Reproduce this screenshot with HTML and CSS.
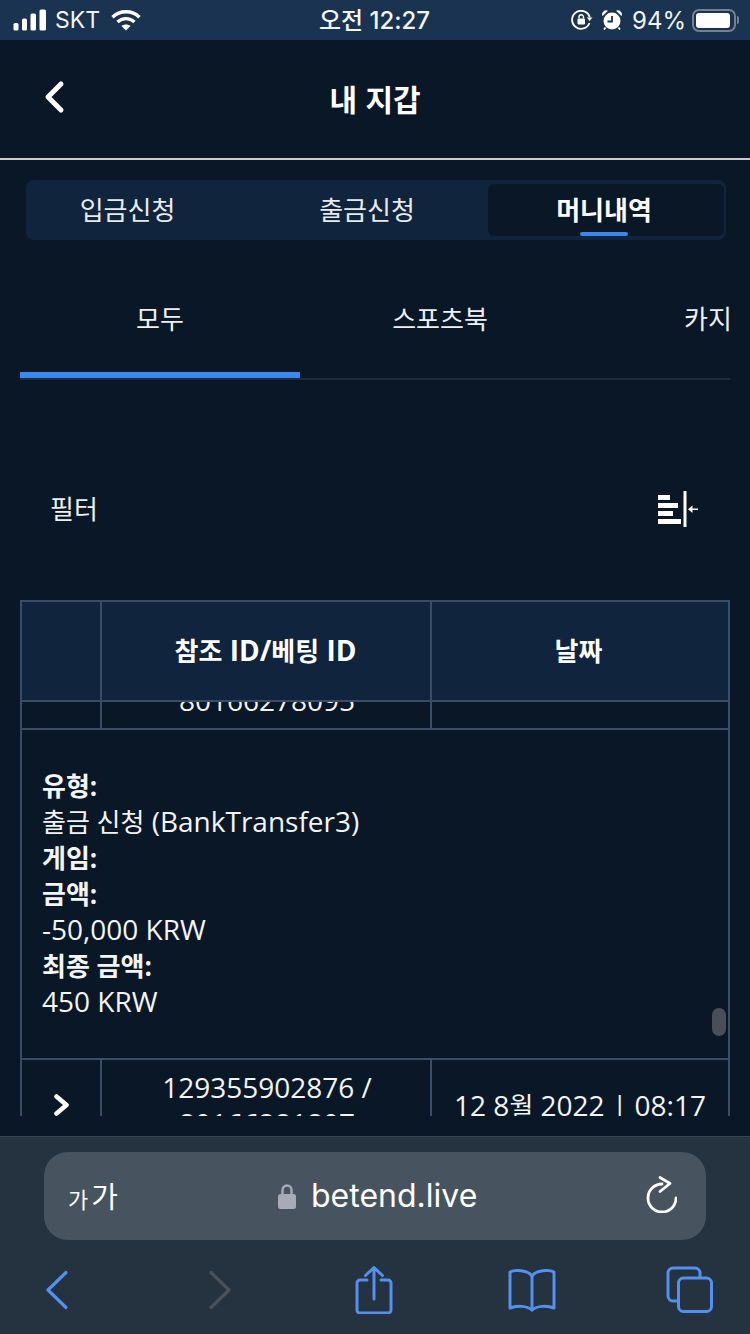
FILE: index.html
```html
<!DOCTYPE html>
<html lang="ko">
<head>
    <meta charset="UTF-8">
    <meta name="viewport" content="width=device-width, initial-scale=1.0">
    <title>내 지갑</title>
    <link rel="stylesheet" href="styles.css">
</head>
<body>
    <div class="status-bar">
        <div class="status-left">
            <svg class="signal" width="34" height="22" viewBox="0 0 34 22">
                <rect x="0.5" y="14" width="5" height="7.5" rx="1.5"/>
                <rect x="9" y="9.5" width="5" height="12" rx="1.5"/>
                <rect x="17.5" y="4.5" width="5.5" height="17" rx="1.5"/>
                <rect x="26.5" y="0.5" width="6.5" height="21" rx="1.5"/>
            </svg>
            <span>SKT</span>
            <svg class="wifi" width="30" height="22" viewBox="0 0 30 22" fill="none" stroke="#fff" stroke-width="3.4">
                <path d="M1.5 8.2C9 1 21 1 28.500 8.200"/>
                <path d="M6.500 13C11.500 8.500 18.500 8.500 23.500 13"/>
                <path d="M15 21.500L10.500 17C13 15 17 15 19.500 17Z" fill="#fff" stroke="none"/>
            </svg>
        </div>
        <div class="status-time">오전 12:27</div>
        <div class="status-right">
            <svg class="lock-icon" width="22" height="20" viewBox="0 0 22 20" fill="none" stroke="#fff" stroke-width="1.8">
                <path d="M18.500 13A9 9 0 1 1 18.800 7.500"/>
                <path d="M15.800 7.500H21.500L18.600 11Z" fill="#fff" stroke="none"/>
                <rect x="6.500" y="8.500" width="7.500" height="6" rx="1" fill="#fff" stroke="none"/>
                <path d="M8 8.500V7a2.200 2.200 0 0 1 4.500 0V8.500" stroke-width="1.400"/>
            </svg>
            <svg width="20" height="20" viewBox="0 0 20 20">
                <circle cx="10" cy="11" r="8.500" fill="#fff"/>
                <path d="M0.500 6A4 4 0 0 1 6 0.800ZM19.500 6A4 4 0 0 0 14 0.800Z" fill="#fff"/>
                <path d="M3.500 17.500L2 19.500M16.500 17.500L18 19.500" stroke="#fff" stroke-width="1.800"/>
                <path d="M10 6V11.500H5.500" fill="none" stroke="#1a3350" stroke-width="1.800"/>
            </svg>
            <span class="battery-text">94%</span>
            <div class="battery"><div class="battery-fill"></div></div>
            <div class="battery-nub"></div>
        </div>
    </div>

    <header class="top-nav">
        <svg class="back" width="24" height="36" viewBox="0 0 24 36" fill="none" stroke="#fff" stroke-width="5" stroke-linecap="round" stroke-linejoin="round">
            <path d="M19 5L6 18L19 31"/>
        </svg>
        <h1>내 지갑</h1>
    </header>

    <main class="wallet">
        <div class="segment">
            <div class="segment-item first">입금신청</div>
            <div class="segment-item">출금신청</div>
            <div class="segment-item active">머니내역</div>
        </div>

        <div class="sub-tabs">
            <div class="sub-tab active">모두</div>
            <div class="sub-tab">스포츠북</div>
            <div class="sub-tab">카지노</div>
        </div>

        <div class="filter-row">
            <span>필터</span>
            <svg width="42" height="38" viewBox="0 0 42 38" fill="#fff">
                <rect x="0" y="5" width="12" height="5"/>
                <rect x="0" y="13" width="20" height="5"/>
                <rect x="0" y="21" width="15" height="5"/>
                <rect x="0" y="29" width="23" height="5"/>
                <rect x="25.500" y="1" width="3" height="36"/>
                <rect x="34" y="18.500" width="6" height="1.500"/>
                <path d="M34.500 15.500V23L30 19.200Z"/>
            </svg>
        </div>

        <div class="history-table">
            <div class="table-row table-head">
                <div class="cell"></div>
                <div class="cell"><span class="ko">참조</span> ID/<span class="ko">베팅</span> ID</div>
                <div class="cell"><span class="ko">날짜</span></div>
            </div>
            <div class="table-body">
                <div class="table-scroll">
                    <div class="table-row">
                        <div class="cell"></div>
                        <div class="cell">129355902877 /<br>80166278095</div>
                        <div class="cell"></div>
                    </div>
                    <div class="detail-row">
                        <div><b class="ko">유형:</b></div>
                        <div><span class="ko">출금 신청</span> (BankTransfer3)</div>
                        <div><b class="ko">게임:</b></div>
                        <div><b class="ko">금액:</b></div>
                        <div>-50,000 KRW</div>
                        <div><b class="ko">최종 금액:</b></div>
                        <div>450 KRW</div>
                    </div>
                    <div class="table-row">
                        <div class="cell">
                            <svg width="20" height="24" viewBox="0 0 20 24" fill="none" stroke="#fff" stroke-width="4.500" stroke-linecap="round" stroke-linejoin="round">
                                <path d="M4.500 3.500L14.500 12L4.500 20.500"/>
                            </svg>
                        </div>
                        <div class="cell"><div>129355902876 /<br>80166281807</div></div>
                        <div class="cell"><div>12 8<span class="ko">월</span> 2022 | 08:17</div></div>
                    </div>
                </div>
                <div class="scroll-thumb"></div>
            </div>
        </div>
    </main>

    <footer class="browser-bar">
        <div class="url-field">
            <div class="text-size"><span class="small">가</span>가</div>
            <div class="url">
                <svg width="18" height="26" viewBox="0 0 18 26" fill="none">
                    <path d="M4.500 12V7a4.500 4.500 0 0 1 9 0V12" stroke="#a7abb5" stroke-width="2.400"/>
                    <rect x="0" y="11" width="18" height="15" rx="2.500" fill="#a7abb5"/>
                </svg>
                <span>betend.live</span>
            </div>
            <svg class="reload" width="32" height="38" viewBox="0 0 32 38" fill="none" stroke="#fff" stroke-width="2.800" stroke-linecap="round" stroke-linejoin="round">
                <path d="M17 9A14 14 0 1 0 31 23"/>
                <path d="M15 2.500L25 8.500L15 16.500"/>
            </svg>
        </div>
        <nav class="toolbar">
            <svg width="48" height="48" viewBox="0 0 48 48" fill="none" stroke="#5390f0" stroke-width="3.200" stroke-linecap="round" stroke-linejoin="round">
                <path d="M33 6.500L15 24L33 41.500"/>
            </svg>
            <svg width="48" height="48" viewBox="0 0 48 48" fill="none" stroke="#4b5158" stroke-width="3.200" stroke-linecap="round" stroke-linejoin="round">
                <path d="M20 6.500L38 24L20 41.500"/>
            </svg>
            <svg width="48" height="48" viewBox="0 0 48 48" fill="none" stroke="#5390f0" stroke-width="3" stroke-linecap="round" stroke-linejoin="round">
                <path d="M17 14H10a3 3 0 0 0-3 3V44a3 3 0 0 0 3 3H38a3 3 0 0 0 3-3V17a3 3 0 0 0-3-3H31"/>
                <path d="M24 33V1.500M15.500 9.500L24 1.500L32.500 9.500"/>
            </svg>
            <svg width="48" height="48" viewBox="0 0 48 48" fill="none" stroke="#5390f0" stroke-width="3" stroke-linecap="round" stroke-linejoin="round">
                <path d="M24 10C20 4 7 3.500 2 6V42C8 39.500 19 39.500 24 44C29 39.500 40 39.500 46 42V6C41 3.500 28 4 24 10Z"/>
                <path d="M24 10V44"/>
            </svg>
            <svg width="48" height="48" viewBox="0 0 48 48" fill="none" stroke="#5390f0" stroke-width="3">
                <path d="M12 35H7a5 5 0 0 1-5-5V7a5 5 0 0 1 5-5H29a5 5 0 0 1 5 5V11"/>
                <rect x="12.500" y="12" width="33" height="33.500" rx="5"/>
            </svg>
        </nav>
    </footer>
</body>
</html>
```

FILE: styles.css
```css
* {
    box-sizing: border-box;
}
html, body {
    margin: 0;
    padding: 0;
}
body {
    width: 750px;
    height: 1334px;
    overflow: hidden;
    display: flex;
    flex-direction: column;
    background: #0a1727;
    color: white;
    font-family: 'Open Sans', 'Noto Sans CJK KR', sans-serif;
    font-size: 28px;
}
.ko {
    font-size: 26px;
}

/* status bar */
.status-bar {
    height: 40px;
    flex: none;
    background: #1a3350;
    display: flex;
    align-items: center;
    justify-content: space-between;
    padding: 0 11px 0 13px;
    position: relative;
    font-family: Inter, 'Noto Sans CJK KR', sans-serif;
    font-size: 23px;
    color: #f2f4f6;
}
.status-left {
    display: flex;
    align-items: center;
    gap: 8px;
}
.status-left .wifi {
    margin-left: 3px;
}
.status-time {
    position: absolute;
    left: 319px;
    top: 1px;
    font-size: 24px;
    font-weight: 500;
    white-space: nowrap;
}
.status-right {
    display: flex;
    align-items: center;
    gap: 10px;
}
.lock-icon {
    margin-right: -1px;
}
.battery-text {
    font-size: 24px;
}
.signal {
    fill: white;
}
.battery {
    width: 44px;
    height: 23px;
    border: 2px solid #76818f;
    border-radius: 7px;
    padding: 2px;
    margin-left: -4px;
}
.battery-fill {
    height: 100%;
    width: 94%;
    background: white;
    border-radius: 3px;
}
.battery-nub {
    width: 2px;
    height: 8px;
    background: #76818f;
    margin-left: -9px;
    border-radius: 0 2px 2px 0;
}

/* title */
.top-nav {
    height: 120px;
    flex: none;
    border-bottom: 2px solid #ccc;
    display: flex;
    align-items: center;
    justify-content: center;
    position: relative;
    padding-bottom: 2px;
}
.top-nav h1 {
    margin: 0;
    font-size: 30px;
    font-weight: 700;
    font-family: 'Noto Sans CJK KR', sans-serif;
}
.back {
    position: absolute;
    left: 42px;
    top: 39px;
}

/* tabs */
.wallet {
    flex: 1;
    min-height: 0;
    padding-top: 20px;
    font-size: 28px;
}
.segment {
    margin: 0 24px 0 26px;
    height: 60px;
    background: #10243d;
    border-radius: 8px;
    display: grid;
    grid-template-columns: 220px 242px 1fr;
    padding: 4px 2px 4px 0;
    font-size: 26px;
    line-height: 52px;
    text-align: center;
    color: #e8ebee;
}
.segment-item.first {
    padding-right: 17px;
}
.segment-item.active {
    background: #0a1727;
    border-radius: 6px;
    font-weight: 700;
    color: white;
    padding-right: 4px;
    position: relative;
}
.segment-item.active::after {
    content: "";
    position: absolute;
    left: 92px;
    bottom: 0;
    width: 48px;
    height: 4px;
    border-radius: 2px;
    background: #3b86f0;
}
.sub-tabs {
    margin: 20px 20px 0;
    height: 120px;
    display: flex;
    overflow: hidden;
    border-bottom: 2px solid #1f2a3a;
    font-size: 26px;
    color: #eef0f2;
}
.sub-tab {
    flex: 0 0 280px;
    text-align: center;
    line-height: 118px;
    white-space: nowrap;
}
.sub-tab.active {
    border-bottom: 6px solid #3b86f0;
}

/* filter */
.filter-row {
    margin: 60px 50px 0 50px;
    height: 140px;
    display: flex;
    align-items: center;
    justify-content: space-between;
    font-size: 26px;
    color: #eef0f2;
}
.filter-row span {
    margin-top: -4px;
}
.filter-row svg {
    margin-top: -2px;
}

/* table */
.history-table {
    margin: 20px 20px 0;
    border-left: 2px solid #3a4d66;
    border-right: 2px solid #3a4d66;
    border-top: 2px solid #3a4d66;
}
.table-row {
    display: grid;
    grid-template-columns: 80px 330px 1fr;
    border-bottom: 2px solid #3a4d66;
}
.cell {
    display: flex;
    align-items: center;
    justify-content: center;
    text-align: center;
    line-height: 36px;
    padding: 9px 0 10px;
    color: #f2f4f6;
}
.cell + .cell {
    border-left: 2px solid #3a4d66;
    margin-left: -2px;
}
.table-head {
    height: 100px;
    background: #10243d;
    font-weight: 700;
}
.table-head .cell {
    color: white;
    display: block;
    line-height: 78px;
    padding-right: 3px;
}
.table-body {
    height: 414px;
    overflow: hidden;
    position: relative;
}
.table-scroll {
    margin-top: -65px;
}
.detail-row {
    height: 330px;
    padding: 37px 20px 0;
    border-bottom: 2px solid #3a4d66;
    color: #f2f4f6;
}
.detail-row div {
    height: 36px;
    line-height: 36px;
}
.scroll-thumb {
    position: absolute;
    left: 690px;
    top: 306px;
    width: 14px;
    height: 28px;
    border-radius: 7px;
    background: #4a4f57;
}

/* safari bar */
.browser-bar {
    height: 198px;
    flex: none;
    background: #25323f;
    border-top: 1px solid #3c4650;
    padding-top: 15px;
}
.url-field {
    margin: 0 44px;
    height: 88px;
    background: #47545f;
    border-radius: 24px;
    display: flex;
    align-items: center;
    justify-content: space-between;
    padding: 0 29px 0 24px;
    position: relative;
}
.reload {
    margin-bottom: 4px;
}
.text-size {
    font-family: 'Noto Sans CJK KR', sans-serif;
    font-size: 29px;
    line-height: 40px;
}
.text-size .small {
    font-size: 22px;
    margin-right: 3px;
}
.url {
    position: absolute;
    left: 234px;
    top: 22px;
    display: flex;
    align-items: center;
    gap: 15px;
    font-family: Inter, sans-serif;
    font-size: 32px;
    line-height: 44px;
    white-space: nowrap;
}
.toolbar {
    display: flex;
    justify-content: space-between;
    padding: 26px 36px 0 33px;
}
```
